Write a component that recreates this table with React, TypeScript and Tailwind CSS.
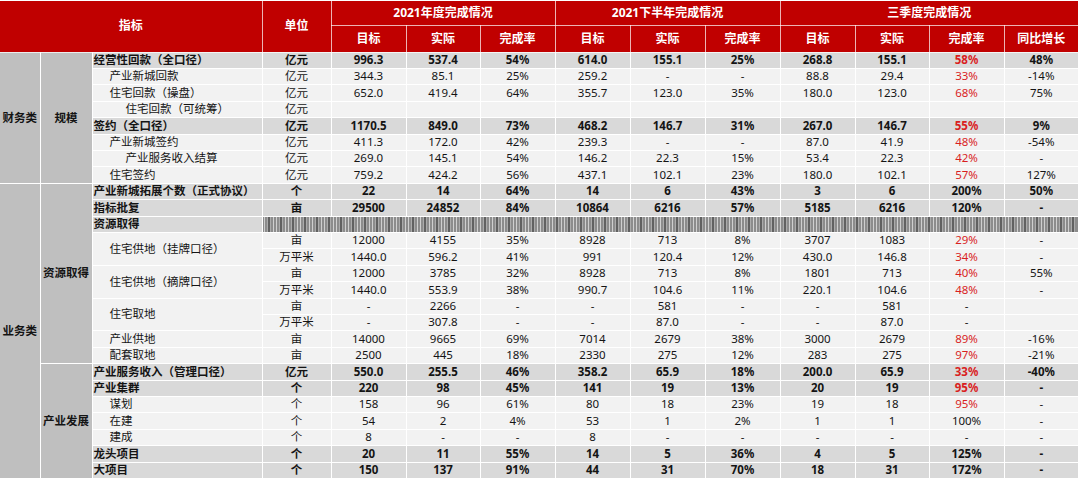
import React from "react";

type Row = {
  label?: string;
  level?: number;
  bold?: boolean;
  unit: string;
  vals: string[];
  labelSpan?: number;
  hatch?: boolean;
};

const rows: Row[] = [
  { label: "经营性回款（全口径）", bold: true, unit: "亿元", vals: ["996.3", "537.4", "54%", "614.0", "155.1", "25%", "268.8", "155.1", "58%", "48%"] },
  { label: "产业新城回款", level: 1, unit: "亿元", vals: ["344.3", "85.1", "25%", "259.2", "-", "-", "88.8", "29.4", "33%", "-14%"] },
  { label: "住宅回款（操盘）", level: 1, unit: "亿元", vals: ["652.0", "419.4", "64%", "355.7", "123.0", "35%", "180.0", "123.0", "68%", "75%"] },
  { label: "住宅回款（可统筹）", level: 2, unit: "亿元", vals: ["", "", "", "", "", "", "", "", "", ""] },
  { label: "签约（全口径）", bold: true, unit: "亿元", vals: ["1170.5", "849.0", "73%", "468.2", "146.7", "31%", "267.0", "146.7", "55%", "9%"] },
  { label: "产业新城签约", level: 1, unit: "亿元", vals: ["411.3", "172.0", "42%", "239.3", "-", "-", "87.0", "41.9", "48%", "-54%"] },
  { label: "产业服务收入结算", level: 2, unit: "亿元", vals: ["269.0", "145.1", "54%", "146.2", "22.3", "15%", "53.4", "22.3", "42%", "-"] },
  { label: "住宅签约", level: 1, unit: "亿元", vals: ["759.2", "424.2", "56%", "437.1", "102.1", "23%", "180.0", "102.1", "57%", "127%"] },
  { label: "产业新城拓展个数（正式协议）", bold: true, unit: "个", vals: ["22", "14", "64%", "14", "6", "43%", "3", "6", "200%", "50%"] },
  { label: "指标批复", bold: true, unit: "亩", vals: ["29500", "24852", "84%", "10864", "6216", "57%", "5185", "6216", "120%", "-"] },
  { label: "资源取得", bold: true, unit: "", vals: [], hatch: true },
  { label: "住宅供地（挂牌口径）", level: 1, labelSpan: 2, unit: "亩", vals: ["12000", "4155", "35%", "8928", "713", "8%", "3707", "1083", "29%", "-"] },
  { labelSpan: 0, unit: "万平米", vals: ["1440.0", "596.2", "41%", "991", "120.4", "12%", "430.0", "146.8", "34%", "-"] },
  { label: "住宅供地（摘牌口径）", level: 1, labelSpan: 2, unit: "亩", vals: ["12000", "3785", "32%", "8928", "713", "8%", "1801", "713", "40%", "55%"] },
  { labelSpan: 0, unit: "万平米", vals: ["1440.0", "553.9", "38%", "990.7", "104.6", "11%", "220.1", "104.6", "48%", "-"] },
  { label: "住宅取地", level: 1, labelSpan: 2, unit: "亩", vals: ["-", "2266", "-", "-", "581", "-", "-", "581", "-", ""] },
  { labelSpan: 0, unit: "万平米", vals: ["-", "307.8", "-", "-", "87.0", "-", "-", "87.0", "-", ""] },
  { label: "产业供地", level: 1, unit: "亩", vals: ["14000", "9665", "69%", "7014", "2679", "38%", "3000", "2679", "89%", "-16%"] },
  { label: "配套取地", level: 1, unit: "亩", vals: ["2500", "445", "18%", "2330", "275", "12%", "283", "275", "97%", "-21%"] },
  { label: "产业服务收入（管理口径）", bold: true, unit: "亿元", vals: ["550.0", "255.5", "46%", "358.2", "65.9", "18%", "200.0", "65.9", "33%", "-40%"] },
  { label: "产业集群", bold: true, unit: "个", vals: ["220", "98", "45%", "141", "19", "13%", "20", "19", "95%", "-"] },
  { label: "谋划", level: 1, unit: "个", vals: ["158", "96", "61%", "80", "18", "23%", "19", "18", "95%", "-"] },
  { label: "在建", level: 1, unit: "个", vals: ["54", "2", "4%", "53", "1", "2%", "1", "1", "100%", "-"] },
  { label: "建成", level: 1, unit: "个", vals: ["8", "-", "-", "8", "-", "-", "-", "-", "-", "-"] },
  { label: "龙头项目", bold: true, unit: "个", vals: ["20", "11", "55%", "14", "5", "36%", "4", "5", "125%", "-"] },
  { label: "大项目", bold: true, unit: "个", vals: ["150", "137", "91%", "44", "31", "70%", "18", "31", "172%", "-"] },
];

// left group cells keyed by row index
const groupA: Record<number, { text: string; span: number }> = {
  0: { text: "财务类", span: 8 },
  8: { text: "业务类", span: 18 },
};
const groupB: Record<number, { text: string; span: number }> = {
  0: { text: "规模", span: 8 },
  8: { text: "资源取得", span: 11 },
  19: { text: "产业发展", span: 7 },
};

const colWidths = [40, 52, 170, 69, 75, 74, 75, 75, 75, 75, 75, 74, 75, 74];

const indent = ["pl-px", "pl-[17px]", "pl-[33px]"];

function isRed(v: string) {
  if (!v.endsWith("%")) return false;
  return parseFloat(v) < 100;
}

export default function App() {
  return (
    <div className="w-[1080px] h-[484px] bg-white pt-px font-['Noto_Sans','Noto_Sans_CJK_SC',sans-serif] text-[#141414]">
      <table className="table-fixed border-collapse w-[1078px]">
        <colgroup>
          {colWidths.map((w, i) => (
            <col key={i} style={{ width: w }} />
          ))}
        </colgroup>
        <thead>
          <tr className="h-[24px] bg-[#c00000] text-white text-[12px] font-bold">
            <th colSpan={3} rowSpan={2} className="border border-white/70 border-t-0 border-l-0 p-0">指标</th>
            <th rowSpan={2} className="border border-white/70 border-t-0 p-0">单位</th>
            <th colSpan={3} className="border border-white/70 border-t-0 p-0">2021年度完成情况</th>
            <th colSpan={3} className="border border-white/70 border-t-0 p-0">2021下半年完成情况</th>
            <th colSpan={4} className="border border-white/70 border-t-0 border-r-0 p-0">三季度完成情况</th>
          </tr>
          <tr className="h-[27px] bg-[#c00000] text-white text-[12px] font-bold">
            {["目标", "实际", "完成率", "目标", "实际", "完成率", "目标", "实际", "完成率", "同比增长"].map((t, i) => (
              <th key={i} className="border border-white/70 p-0 last:border-r-0">{t}</th>
            ))}
          </tr>
        </thead>
        <tbody className="text-[11.5px] leading-none">
          {rows.map((r, ri) => {
            const rowBg = r.bold ? "bg-[#d9d9d9]" : "bg-[#f2f2f2]";
            const weight = r.bold ? "font-bold" : "font-normal";
            const a = groupA[ri];
            const b = groupB[ri];
            return (
              <tr key={ri} className={ri % 5 === 2 || ri % 5 === 4 ? "h-[17px]" : "h-[16px]"}>
                {a && (
                  <td rowSpan={a.span} className="border border-white border-l-0 bg-[#bfbfbf] text-center font-bold p-0">
                    {a.text}
                  </td>
                )}
                {b && (
                  <td rowSpan={b.span} className="border border-white bg-[#bfbfbf] text-center font-bold p-0">
                    {b.text}
                  </td>
                )}
                {r.labelSpan !== 0 && (
                  <td
                    rowSpan={r.labelSpan ?? 1}
                    className={`border border-white p-0 whitespace-nowrap ${r.labelSpan === 2 ? "bg-[#f2f2f2]" : rowBg} ${weight} ${indent[r.level ?? 0]}`}
                  >
                    {r.label}
                  </td>
                )}
                {r.hatch ? (
                  <td
                    colSpan={11}
                    className="border border-white border-r-0 p-0 bg-[#cfcfcf] [background-image:repeating-linear-gradient(90deg,rgba(40,40,40,0.8)_0px,rgba(40,40,40,0.8)_1px,transparent_1px,transparent_3px),repeating-linear-gradient(90deg,transparent_0px,transparent_5px,rgba(0,0,0,0.35)_5px,rgba(0,0,0,0.35)_8px,transparent_8px,transparent_12px)]"
                  />
                ) : (
                  <>
                    <td className={`border border-white p-0 text-center ${rowBg} ${weight}`}>{r.unit}</td>
                    {r.vals.map((v, vi) => (
                      <td
                        key={vi}
                        className={`border border-white p-0 text-center ${rowBg} ${weight} ${vi === 9 ? "border-r-0" : ""} ${vi === 8 && isRed(v) ? "text-[#d91f1f]" : ""}`}
                      >
                        {v}
                      </td>
                    ))}
                  </>
                )}
              </tr>
            );
          })}
        </tbody>
      </table>
    </div>
  );
}
